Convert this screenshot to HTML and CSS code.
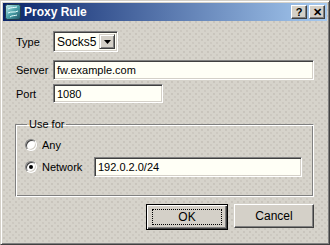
FILE: index.html
```html
<!DOCTYPE html>
<html>
<head>
    <title>Proxy Rule</title>
    <link rel="stylesheet" href="styles.css">
</head>
<body>
    <div class="window">
        <div class="titlebar">
            <svg class="app-icon" width="16" height="16" viewBox="0 0 16 16">
                <defs>
                    <linearGradient id="ig" x1="0" y1="0" x2="1" y2="1">
                        <stop offset="0" stop-color="#c8f0f0"/>
                        <stop offset="0.5" stop-color="#4aa0a8"/>
                        <stop offset="1" stop-color="#1e4e60"/>
                    </linearGradient>
                </defs>
                <rect x="0.5" y="0.5" width="15" height="15" rx="2" fill="url(#ig)" stroke="#20384a"/>
                <path d="M3 5 C6 3, 9 4, 12 3 M3 9 C6 7, 10 9, 13 7 M5 13 C7 11, 10 12, 12 11" stroke="#e8ffff" stroke-width="1" fill="none"/>
            </svg>
            <span class="title">Proxy Rule</span>
            <div class="caption-buttons">
                <button class="cap-btn">?</button>
                <button class="cap-btn">&#x2715;</button>
            </div>
        </div>
        <div class="client">
            <div class="row row-type">
                <label class="lbl">Type</label>
                <div class="combo">
                    <span class="combo-text">Socks5</span>
                    <span class="combo-btn">
                        <svg width="7" height="4" viewBox="0 0 7 4"><path d="M0 0h7L3.5 4z" fill="#000"/></svg>
                    </span>
                </div>
            </div>
            <div class="row row-server">
                <label class="lbl">Server</label>
                <div class="field wide">fw.example.com</div>
            </div>
            <div class="row row-port">
                <label class="lbl">Port</label>
                <div class="field short">1080</div>
            </div>
            <fieldset class="group">
                <legend>Use for</legend>
                <div class="radio-row">
                    <span class="radio"></span>
                    <span class="radio-label">Any</span>
                </div>
                <div class="radio-row">
                    <span class="radio checked"></span>
                    <span class="radio-label">Network</span>
                    <div class="field net">192.0.2.0/24</div>
                </div>
            </fieldset>
            <div class="buttons">
                <button class="btn default"><span class="focus">OK</span></button>
                <button class="btn">Cancel</button>
            </div>
        </div>
    </div>
</body>
</html>
```

FILE: styles.css
```css
body {
    margin: 0;
    padding: 0;
    font-family: "Liberation Sans", Arial, sans-serif;
    font-size: 11px;
    color: #000;
    background-color: #d4d0c8;
    overflow: hidden;
}
.window {
    width: 330px;
    height: 245px;
    box-sizing: border-box;
    padding: 2px;
    border: 1px solid;
    border-color: #d4d0c8 #404040 #404040 #d4d0c8;
    box-shadow: inset 1px 1px #fff, inset -1px -1px #808080;
    background-color: #d6d3cb;
    background-image:
        radial-gradient(circle, #bab6ae 0.5px, transparent 0.9px),
        radial-gradient(circle, #c2beb6 0.5px, transparent 0.9px);
    background-size: 6px 6px, 6px 6px;
    background-position: 0 0, 3px 3px;
    display: flex;
    flex-direction: column;
}
.titlebar {
    height: 18px;
    display: flex;
    align-items: center;
    padding: 0 2px 0 2px;
    background: linear-gradient(to right, #0a246a, #a6caf0);
    color: #fff;
}
.app-icon {
    margin-right: 3px;
}
.title {
    font-weight: bold;
    font-size: 12px;
    flex: 1;
}
.caption-buttons {
    display: flex;
    gap: 2px;
}
.cap-btn {
    width: 16px;
    height: 14px;
    padding: 0;
    border: 1px solid;
    border-color: #fff #404040 #404040 #fff;
    box-shadow: inset -1px -1px #808080;
    background: #d4d0c8;
    font-family: "Liberation Sans", Arial, sans-serif;
    font-weight: bold;
    font-size: 11px;
    line-height: 11px;
    color: #000;
}
.client {
    flex: 1;
    padding: 10px 13px 0 12px;
}
.row {
    display: flex;
    align-items: center;
}
.row-server {
    margin-top: 8px;
}
.row-port {
    margin-top: 4px;
}
.lbl {
    width: 37px;
    padding-left: 1px;
}
.combo, .field {
    box-sizing: border-box;
    height: 20px;
    border: 1px solid;
    border-color: #808080 #fff #fff #808080;
    box-shadow: inset 1px 1px #404040, inset -1px -1px #d4d0c8;
    background: #fffff6;
    display: flex;
    align-items: center;
    padding-left: 3px;
}
.combo {
    width: 65px;
    height: 21px;
    padding-right: 2px;
}
.combo-text {
    flex: 1;
    font-size: 12px;
}
.combo-btn {
    width: 16px;
    height: 15px;
    box-sizing: border-box;
    border: 1px solid;
    border-color: #d4d0c8 #404040 #404040 #d4d0c8;
    box-shadow: inset 1px 1px #fff, inset -1px -1px #808080;
    background: #d4d0c8;
    display: flex;
    align-items: center;
    justify-content: center;
}
.field.wide {
    flex: 1;
}
.field.short {
    width: 110px;
    height: 19px;
}
.group {
    margin: 15px 0 0 0;
    padding: 5px 0 0 9px;
    height: 79px;
    border: 1px solid;
    border-color: #808080 #fff #fff #808080;
    box-shadow: inset 1px 1px #fff, inset -1px -1px #808080;
    width: 299px;
    box-sizing: border-box;
}
.group legend {
    padding: 0 2px;
    margin-left: 2px;
}
.radio-row {
    display: flex;
    align-items: center;
    height: 20px;
}
.radio-row + .radio-row {
    margin-top: 2px;
}
.radio {
    width: 12px;
    height: 12px;
    box-sizing: border-box;
    border-radius: 50%;
    border: 1px solid;
    border-color: #808080 #fff #fff #808080;
    box-shadow: inset 1px 1px #404040, inset -1px -1px #d4d0c8;
    background: #fff;
    position: relative;
    margin-right: 5px;
}
.radio.checked::after {
    content: "";
    position: absolute;
    left: 3px;
    top: 3px;
    width: 4px;
    height: 4px;
    border-radius: 50%;
    background: #000;
}
.radio-label {
    width: 52px;
}
.field.net {
    width: 208px;
    height: 20px;
}
.buttons {
    display: flex;
    justify-content: flex-end;
    gap: 6px;
    margin-top: 7px;
}
.btn {
    width: 80px;
    height: 24px;
    padding: 0;
    border: 1px solid;
    border-color: #fff #404040 #404040 #fff;
    box-shadow: inset -1px -1px #808080, inset 1px 1px #d4d0c8;
    background: #d4d0c8;
    font-family: "Liberation Sans", Arial, sans-serif;
    font-size: 12px;
    color: #000;
}
.btn.default {
    width: 82px;
    height: 26px;
    border: 1px solid #000;
    box-shadow: inset 1px 1px #fff, inset -1px -1px #404040, inset -2px -2px #808080;
    display: flex;
    align-items: center;
    justify-content: center;
}
.focus {
    box-sizing: border-box;
    width: 70px;
    height: 16px;
    border: 1px dotted #000;
    display: flex;
    align-items: center;
    justify-content: center;
}
```
